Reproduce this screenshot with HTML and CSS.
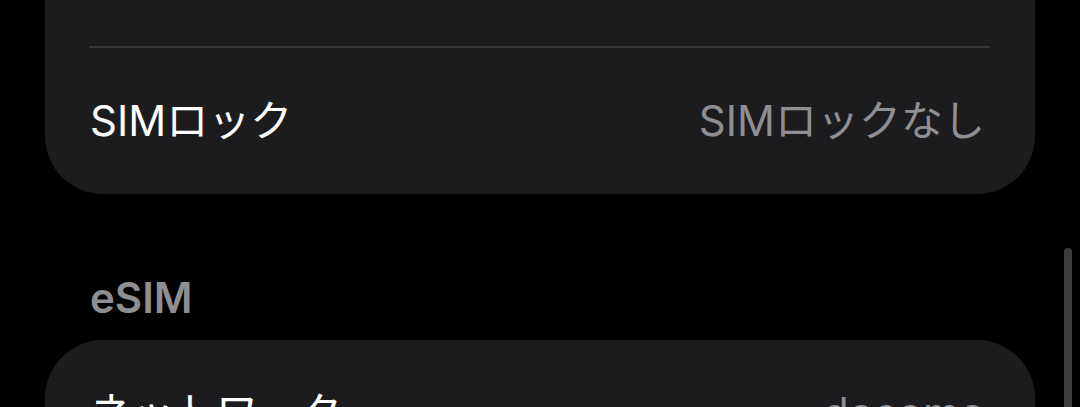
FILE: index.html
```html
<!DOCTYPE html>
<html lang="ja">
<head>
  <meta charset="UTF-8">
  <meta name="viewport" content="width=device-width, initial-scale=1.0">
  <title>SIM</title>
  <link rel="stylesheet" href="styles.css">
</head>
<body>
  <div class="screen">
    <div class="group group-top">
      <div class="divider"></div>
      <div class="row">
        <span class="row-label">SIMロック</span>
        <span class="row-value">SIMロックなし</span>
      </div>
    </div>

    <h2 class="section-title">eSIM</h2>

    <div class="group">
      <div class="row">
        <span class="row-label">ネットワーク</span>
        <span class="row-value">docomo</span>
      </div>
      <div class="row"></div>
    </div>

    <div class="scroll-indicator"></div>
  </div>
</body>
</html>
```

FILE: styles.css
```css
:root {
  --bg: #000000;
  --card: #1c1c1e;
  --divider: #38383a;
  --text: #ffffff;
  --secondary: #8e8e93;
  --scroll: #3c3c3e;
}

* {
  margin: 0;
  padding: 0;
  box-sizing: border-box;
}

html, body {
  height: 100%;
  overflow: hidden;
}

body {
  background: var(--bg);
  color: var(--text);
  font-family: "Inter", "Noto Sans CJK JP", sans-serif;
  font-size: 42px;
}

.screen {
  position: relative;
  height: 100%;
}

.group {
  margin: 0 45px;
  background: var(--card);
  border-radius: 58px;
}

.group-top {
  padding-top: 46px;
  border-radius: 0 0 58px 58px;
}

.divider {
  height: 2px;
  margin: 0 45px 0 44px;
  background: var(--divider);
}

.row {
  height: 146px;
  display: flex;
  align-items: center;
  justify-content: space-between;
  padding: 0 50px 0 45px;
  line-height: 1;
}

.row-value {
  color: var(--secondary);
}

.section-title {
  margin: 83px 0 21px 90px;
  font-size: 42px;
  font-weight: 600;
  line-height: 1;
  color: var(--secondary);
}

/* overlay scroll thumb */
.scroll-indicator {
  position: absolute;
  top: 248px;
  right: 8px;
  width: 8px;
  height: 170px;
  border-radius: 4px;
  background: var(--scroll);
}
```
